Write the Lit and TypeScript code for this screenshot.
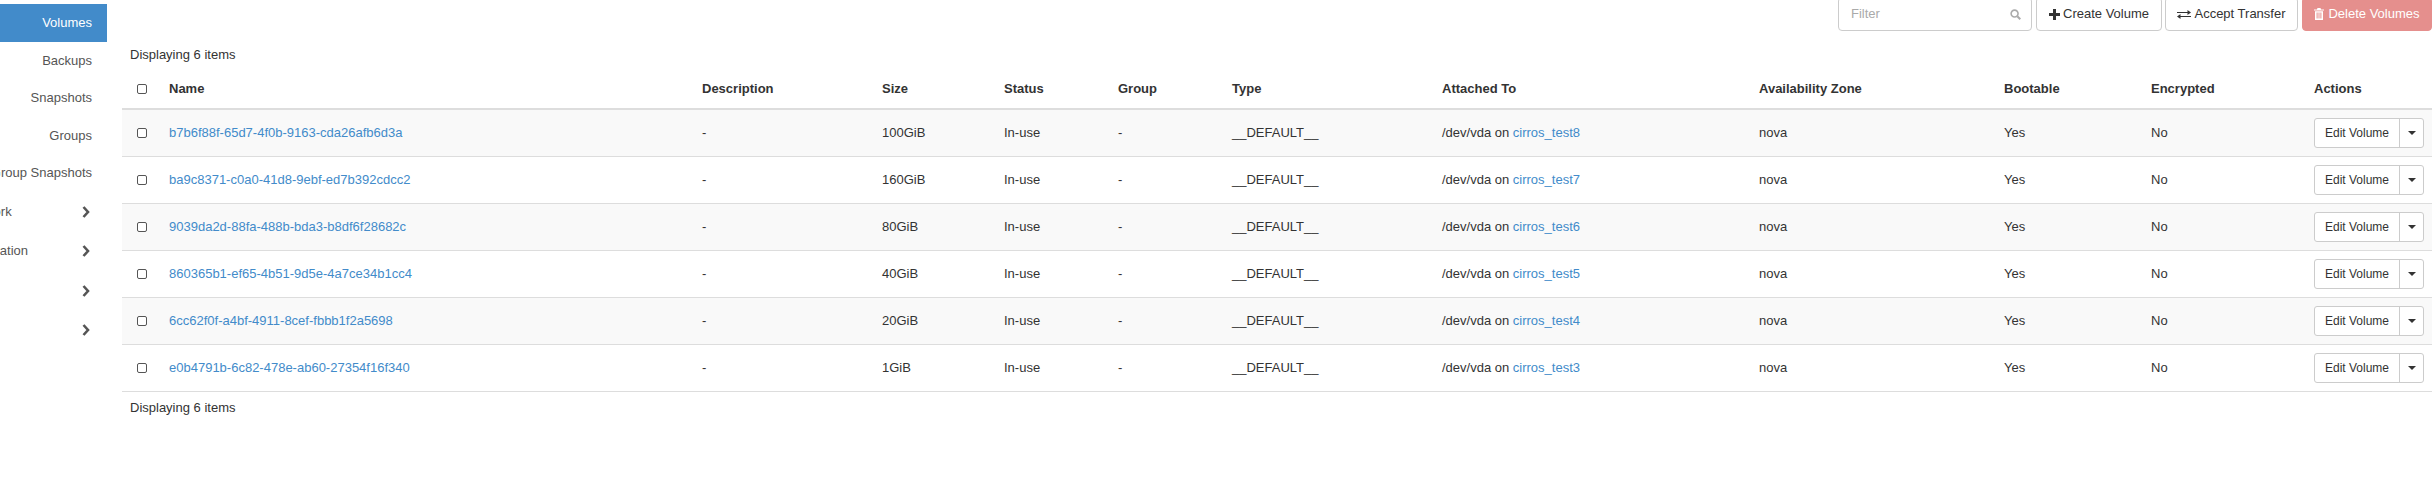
import { LitElement, html, css, svg } from "lit";
import { customElement } from "lit/decorators.js";

const rows = [
  ["b7b6f88f-65d7-4f0b-9163-cda26afb6d3a", "100GiB", "cirros_test8"],
  ["ba9c8371-c0a0-41d8-9ebf-ed7b392cdcc2", "160GiB", "cirros_test7"],
  ["9039da2d-88fa-488b-bda3-b8df6f28682c", "80GiB", "cirros_test6"],
  ["860365b1-ef65-4b51-9d5e-4a7ce34b1cc4", "40GiB", "cirros_test5"],
  ["6cc62f0f-a4bf-4911-8cef-fbbb1f2a5698", "20GiB", "cirros_test4"],
  ["e0b4791b-6c82-478e-ab60-27354f16f340", "1GiB", "cirros_test3"],
];
const heads = ["Name", "Description", "Size", "Status", "Group", "Type", "Attached To", "Availability Zone", "Bootable", "Encrypted", "Actions"];
const widths = [39, 533, 180, 122, 114, 114, 210, 317, 245, 147, 163, 126];

const chevron = svg`<svg class="chev" width="8" height="12" viewBox="0 0 8 12"><path d="M1.5 1 L6 6 L1.5 11" fill="none" stroke="#555" stroke-width="2.6"/></svg>`;
const plus = html`<svg class="ico" width="11" height="11" viewBox="0 0 11 11"><path d="M4 0h3v4h4v3H7v4H4V7H0V4h4z" fill="#333"/></svg>`;
const exchange = html`<svg class="ico" width="14" height="11" viewBox="0 0 14 11"><path d="M0 3h10.5V1L14 3.5 10.5 6V4H0zM14 7H3.5V5L0 7.5 3.5 10V8H14z" fill="#333"/></svg>`;
const trash = html`<svg class="ico" width="10" height="12" viewBox="0 0 10 12"><path d="M3.5 0h3l.6 1.4H10v1.2H0V1.4h2.9zM1 3.2h8V12H1zM2.6 4.4v6.2h1V4.4zm1.9 0v6.2h1V4.4zm1.9 0v6.2h1V4.4z" fill="#fff" fill-rule="evenodd"/></svg>`;
const search = html`<svg class="search" width="11" height="11" viewBox="0 0 12 12"><circle cx="5" cy="5" r="3.8" fill="none" stroke="#aaa" stroke-width="1.7"/><path d="M8 8l3.2 3.2" stroke="#aaa" stroke-width="2.2"/></svg>`;

@customElement("app-root")
export class AppRoot extends LitElement {
  static styles = css`
    :host {
      display: flex;
      width: 2435px;
      height: 489px;
      overflow: hidden;
      background: #fff;
      font-family: "Liberation Sans", Arial, sans-serif;
      font-size: 13px;
      line-height: 20px;
      color: #333;
    }
    .side {
      width: 107px;
      flex: none;
      padding-top: 4px;
      color: #555;
    }
    .item {
      height: 37.5px;
      display: flex;
      align-items: center;
      justify-content: flex-end;
      padding-right: 15px;
      box-sizing: border-box;
      white-space: nowrap;
    }
    .item.active {
      background: #428bca;
      color: #fff;
      height: 38px;
    }
    .parent {
      height: 39.3px;
      position: relative;
      justify-content: flex-start;
      padding: 0;
    }
    .parent .label { flex: none; }
    .net { margin-left: -36px; }
    .orch { margin-left: -50px; }
    .chev { position: absolute; left: 82px; top: 14px; }
    .main {
      flex: 1;
      min-width: 0;
      padding: 0 3px 0 15px;
    }
    .toolbar {
      display: flex;
      justify-content: flex-end;
      gap: 4px;
      margin-top: -3px;
      height: 34px;
    }
    .filter {
      width: 194px;
      height: 34px;
      box-sizing: border-box;
      border: 1px solid #ccc;
      border-radius: 4px;
      display: flex;
      align-items: center;
      justify-content: space-between;
      padding: 0 10px 0 12px;
      color: #aaa;
    }
    .btn {
      height: 34px;
      box-sizing: border-box;
      border: 1px solid #ccc;
      border-radius: 4px;
      display: flex;
      align-items: center;
      justify-content: center;
      gap: 3px;
      background: #fff;
      color: #333;
    }
    .create { width: 126px; }
    .accept { width: 133px; margin-left: -1px; }
    .delete {
      width: 130px;
      gap: 4px;
      background: #e58f8d;
      border-color: #e58f8d;
      color: #fff;
    }
    .count { padding: 0 0 0 8px; margin: 14px 0 0; height: 20px; }
    .foot { margin-top: 6px; }
    table {
      width: 2310px;
      table-layout: fixed;
      border-collapse: separate;
      border-spacing: 0;
    }
    th {
      text-align: left;
      font-weight: bold;
      padding: 14px 8px 9px;
      border-bottom: 2px solid #ddd;
    }
    td {
      height: 46px;
      box-sizing: content-box;
      padding: 0 8px;
      border-bottom: 1px solid #ddd;
      white-space: nowrap;
    }
    tbody tr:nth-child(odd) td { background: #f9f9f9; }
    th.chk, td.chk { padding: 0 0 0 15px; }
    th.chk { padding-top: 5px; }
    input {
      appearance: none;
      display: block;
      width: 10px;
      height: 10px;
      margin: 0;
      background: #fff;
      border: 1px solid #555;
      border-radius: 2px;
      box-sizing: border-box;
    }
    a { color: #428bca; text-decoration: none; }
    .split {
      display: flex;
      width: 110px;
      height: 30px;
      box-sizing: border-box;
      border: 1px solid #ccc;
      border-radius: 3px;
      background: #fff;
      font-size: 12px;
    }
    .split .edit {
      flex: 1;
      display: flex;
      align-items: center;
      justify-content: center;
      border-right: 1px solid #ccc;
    }
    .split .tog {
      width: 23px;
      display: flex;
      align-items: center;
      justify-content: center;
    }
    .caret {
      width: 0;
      height: 0;
      border-left: 4px solid transparent;
      border-right: 4px solid transparent;
      border-top: 4px solid #333;
    }
  `;

  render() {
    return html`
      <nav class="side">
        <div class="item active">Volumes</div>
        <div class="item">Backups</div>
        <div class="item">Snapshots</div>
        <div class="item">Groups</div>
        <div class="item">Group Snapshots</div>
        <div class="item parent"><span class="label net">Network</span>${chevron}</div>
        <div class="item parent"><span class="label orch">Orchestration</span>${chevron}</div>
        <div class="item parent">${chevron}</div>
        <div class="item parent">${chevron}</div>
      </nav>
      <main class="main">
        <div class="toolbar">
          <div class="filter"><span>Filter</span>${search}</div>
          <div class="btn create">${plus}<span>Create Volume</span></div>
          <div class="btn accept">${exchange}<span>Accept Transfer</span></div>
          <div class="btn delete">${trash}<span>Delete Volumes</span></div>
        </div>
        <div class="count">Displaying 6 items</div>
        <table>
          <colgroup>${widths.map((w) => html`<col style="width:${w}px" />`)}</colgroup>
          <thead>
            <tr>
              <th class="chk"><input type="checkbox" /></th>
              ${heads.map((h) => html`<th>${h}</th>`)}
            </tr>
          </thead>
          <tbody>
            ${rows.map(
              (r) => html`<tr>
                <td class="chk"><input type="checkbox" /></td>
                <td><a>${r[0]}</a></td>
                <td>-</td>
                <td>${r[1]}</td>
                <td>In-use</td>
                <td>-</td>
                <td>__DEFAULT__</td>
                <td>/dev/vda on <a>${r[2]}</a></td>
                <td>nova</td>
                <td>Yes</td>
                <td>No</td>
                <td>
                  <div class="split">
                    <div class="edit">Edit Volume</div>
                    <div class="tog"><span class="caret"></span></div>
                  </div>
                </td>
              </tr>`
            )}
          </tbody>
        </table>
        <div class="count foot">Displaying 6 items</div>
      </main>
    `;
  }
}
